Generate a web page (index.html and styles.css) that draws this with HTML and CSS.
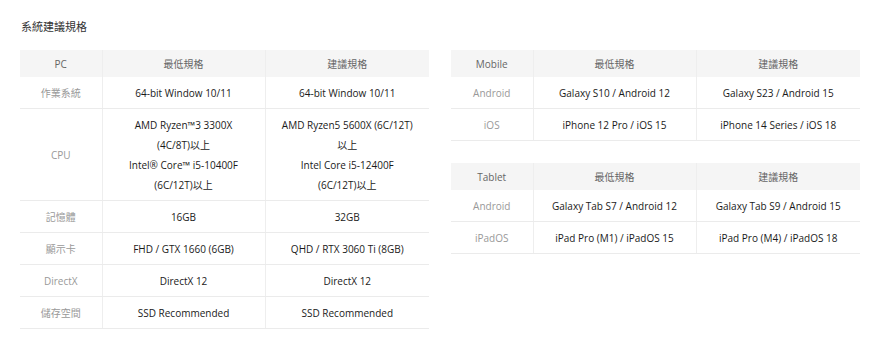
FILE: index.html
```html
<!DOCTYPE html>
<html lang="zh-Hant">
<head>
<meta charset="utf-8">
<link rel="stylesheet" href="styles.css">
</head>
<body>
<div class="page">
  <h2 class="title">系統建議規格</h2>
  <div class="tables">
    <table class="spec spec-pc">
      <colgroup><col class="c1"><col class="c2"><col class="c3"></colgroup>
      <thead>
        <tr><th>PC</th><th>最低規格</th><th>建議規格</th></tr>
      </thead>
      <tbody>
        <tr><td class="label">作業系統</td><td>64-bit Window 10/11</td><td>64-bit Window 10/11</td></tr>
        <tr><td class="label">CPU</td><td>AMD Ryzen™3 3300X<br>(4C/8T)以上<br>Intel® Core™ i5-10400F<br>(6C/12T)以上</td><td>AMD Ryzen5 5600X (6C/12T)<br>以上<br>Intel Core i5-12400F<br>(6C/12T)以上</td></tr>
        <tr><td class="label">記憶體</td><td>16GB</td><td>32GB</td></tr>
        <tr><td class="label">顯示卡</td><td>FHD / GTX 1660 (6GB)</td><td>QHD / RTX 3060 Ti (8GB)</td></tr>
        <tr><td class="label">DirectX</td><td>DirectX 12</td><td>DirectX 12</td></tr>
        <tr><td class="label">儲存空間</td><td>SSD Recommended</td><td>SSD Recommended</td></tr>
      </tbody>
    </table>
    <div class="side">
      <table class="spec">
        <colgroup><col class="c1"><col class="c2"><col class="c3"></colgroup>
        <thead>
          <tr><th>Mobile</th><th>最低規格</th><th>建議規格</th></tr>
        </thead>
        <tbody>
          <tr><td class="label">Android</td><td>Galaxy S10 / Android 12</td><td>Galaxy S23 / Android 15</td></tr>
          <tr><td class="label">iOS</td><td>iPhone 12 Pro / iOS 15</td><td>iPhone 14 Series / iOS 18</td></tr>
        </tbody>
      </table>
      <table class="spec">
        <colgroup><col class="c1"><col class="c2"><col class="c3"></colgroup>
        <thead>
          <tr><th>Tablet</th><th>最低規格</th><th>建議規格</th></tr>
        </thead>
        <tbody>
          <tr><td class="label">Android</td><td>Galaxy Tab S7 / Android 12</td><td>Galaxy Tab S9 / Android 15</td></tr>
          <tr><td class="label">iPadOS</td><td>iPad Pro (M1) / iPadOS 15</td><td>iPad Pro (M4) / iPadOS 18</td></tr>
        </tbody>
      </table>
    </div>
  </div>
</div>
</body>
</html>
```

FILE: styles.css
```css
* { box-sizing: border-box; }
body {
  margin: 0;
  background: #fff;
  font-family: "Open Sans", "Noto Sans CJK TC", sans-serif;
  color: #222;
}
.page {
  padding: 18px 20px 0 20px;
}
.title {
  margin: 0 0 14px 1px;
  font-size: 11px;
  line-height: 18px;
  font-weight: 400;
  color: #333;
}
.tables {
  display: flex;
  gap: 22px;
  align-items: flex-start;
}
.side {
  display: flex;
  flex-direction: column;
  gap: 22px;
}
.spec {
  width: 409px;
  border-collapse: collapse;
  table-layout: fixed;
  font-size: 10px;
}
.spec .c1 { width: 82px; }
.spec .c2 { width: 163px; }
.spec .c3 { width: 164px; }
.spec th {
  background: #f5f5f5;
  font-weight: 400;
  color: #666;
  line-height: 19px;
  padding: 5px 0 3px;
  text-align: center;
}
.spec td {
  line-height: 20px;
  padding: 6px 0 5px;
  text-align: center;
  border-bottom: 1px solid #ebebeb;
  color: #1a1a1a;
}
.spec th + th, .spec td + td {
  border-left: 1px solid #eeeeee;
}
.spec td.label {
  color: #999;
}
```
